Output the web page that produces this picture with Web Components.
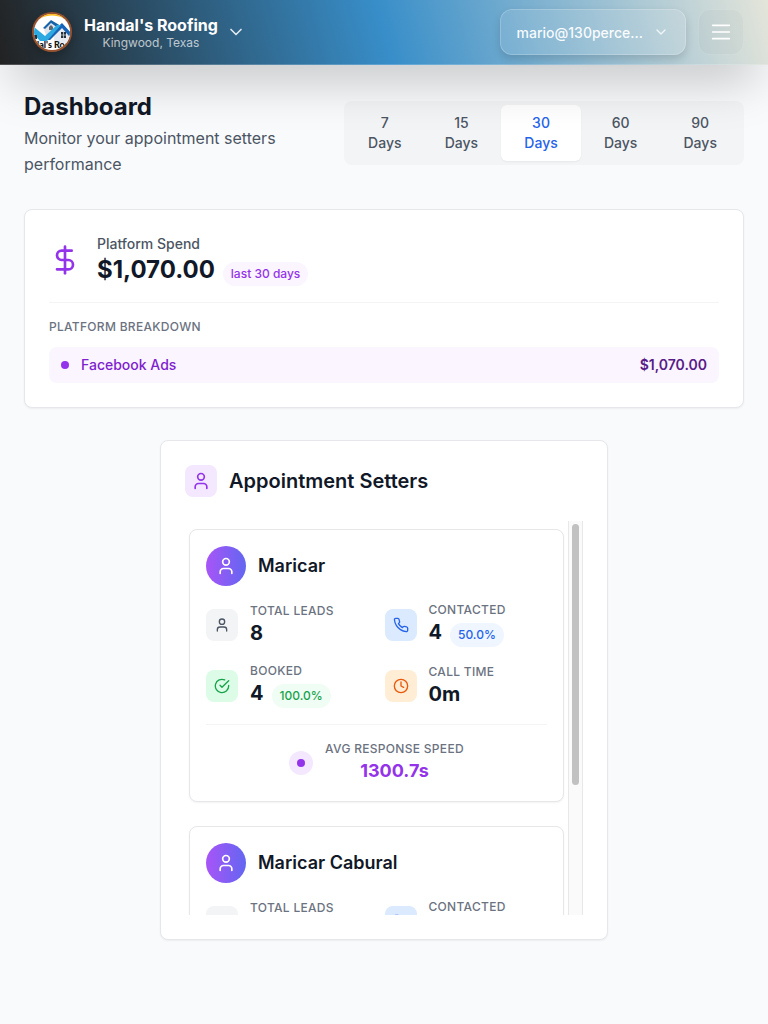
<!DOCTYPE html>
<html lang="en">
<head>
<meta charset="utf-8">
<meta name="viewport" content="width=device-width, initial-scale=1">
<title>Dashboard</title>
<style>
  body {
    margin: 0;
    min-height: 100vh;
    background: #f9fafc;
    color: #111827;
    font-family: Inter, "Liberation Sans", sans-serif;
    font-size: 16px;
  }
</style>
</head>
<body>
<dashboard-app></dashboard-app>

<script>
const ICONS = {
  user: '<path d="M19 21v-2a4 4 0 0 0-4-4H9a4 4 0 0 0-4 4v2"/><circle cx="12" cy="7" r="4"/>',
  dollar: '<path d="M12 2v20"/><path d="M17 5H9.5a3.5 3.5 0 0 0 0 7h5a3.5 3.5 0 0 1 0 7H6"/>',
  phone: '<path d="M22 16.92v3a2 2 0 0 1-2.18 2 19.79 19.79 0 0 1-8.63-3.07 19.5 19.5 0 0 1-6-6 19.79 19.79 0 0 1-3.07-8.67A2 2 0 0 1 4.11 2h3a2 2 0 0 1 2 1.72 12.84 12.84 0 0 0 .7 2.81 2 2 0 0 1-.45 2.11L8.09 9.91a16 16 0 0 0 6 6l1.27-1.27a2 2 0 0 1 2.11-.45 12.84 12.84 0 0 0 2.81.7A2 2 0 0 1 22 16.92z"/>',
  check: '<path d="M22 11.08V12a10 10 0 1 1-5.93-9.14"/><path d="m9 11 3 3L22 4"/>',
  clock: '<circle cx="12" cy="12" r="10"/><path d="M12 6v6l4 2"/>',
  chevron: '<path d="m6 9 6 6 6-6"/>',
  menu: '<path d="M2 4h20M2 12h20M2 20h20"/>'
};

function define(name, html, setup) {
  const template = document.createElement('template');
  template.innerHTML = '<style>*{box-sizing:border-box}p,h1,h2,h3{margin:0}button{font:inherit;color:inherit;border:0;background:none;padding:0;cursor:pointer}</style>' + html;
  customElements.define(name, class extends HTMLElement {
    constructor() {
      super();
      this.attachShadow({ mode: 'open' }).append(template.content.cloneNode(true));
    }
    connectedCallback() { if (setup) setup(this, this.shadowRoot); }
  });
}

define('ui-icon', `
  <style>
    :host { display: block; flex: none; width: var(--size, 16px); height: var(--size, 16px); }
    svg { display: block; width: 100%; height: 100%; }
  </style>
  <svg viewBox="0 0 24 24" fill="none" stroke="currentColor" stroke-width="2" stroke-linecap="round" stroke-linejoin="round" aria-hidden="true"></svg>
`, (host, root) => { root.querySelector('svg').innerHTML = ICONS[host.getAttribute('name')]; });

define('ui-chip', `
  <style>
    :host { display: inline-block; padding: 4px 8px; border-radius: 12px; font-size: 12px; font-weight: 500; line-height: 16px; color: #9333ea; background: #faf5ff; }
    :host([tone="blue"]) { color: #2563eb; background: #eff6ff; }
    :host([tone="green"]) { color: #16a34a; background: #f0fdf4; }
  </style>
  <slot></slot>
`);

define('brand-logo', `
  <style>
    :host { display: block; width: 40px; height: 40px; border-radius: 50%; box-shadow: 0 4px 12px rgba(0,0,0,.25); }
    svg { display: block; width: 100%; height: 100%; }
  </style>
  <svg viewBox="0 0 40 40" role="img" aria-label="Handal's Roofing logo">
    <clipPath id="disc"><circle cx="20" cy="20" r="18"/></clipPath>
    <circle cx="20" cy="20" r="20" fill="#97532f"/>
    <g clip-path="url(#disc)">
      <rect width="40" height="40" fill="#fff"/>
      <path d="M2 14C6 0 34 0 38 14L40 0H0Z" fill="#fdb913"/>
      <path d="M2 17C8 4 32 4 38 17L38 19H2Z" fill="#fff"/>
      <path d="M12 18L19 11L26 16L16 27Z" fill="#dfe4ea"/>
      <path d="M11 16L19 8L29 14L26 16L19 11L13 17Z" fill="#1763a8"/>
      <path d="M17 15l2-2 2 2v3h-4z" fill="#5d6873"/>
      <path d="M22 23l8-8 8 9v7H22z" fill="#e7eaf0"/>
      <path d="M30 11L40 22L37 24L30 16L18 28H14V25Z" fill="#1763b5"/>
      <path d="M2 15L13 24L25 13H29L15 29H8L1 21Z" fill="#2ba9e0"/>
      <path d="M29 20h5v6h-5z" fill="#27303a"/>
      <path d="M31.500 20v6M29 23h5" stroke="#dfe5ea" stroke-width=".7"/>
      <path d="M2 23h3v4H2z" fill="#27303a"/>
      <text x="20" y="36" text-anchor="middle" font-family="Lato, sans-serif" font-weight="900" font-size="9" fill="#111">dal's Roo</text>
    </g>
  </svg>
`);

define('app-header', `
  <style>
    :host { display: block; position: sticky; top: 0; z-index: 10; color: #fff; }
    header {
      display: flex; align-items: center; justify-content: space-between; gap: 12px;
      padding: 9px 24px; border-bottom: 1px solid rgba(255,255,255,.2);
      background: linear-gradient(75deg, #222 0%, #388ec9 50%, #e4e5da 100%) border-box;
      box-shadow: 0 25px 50px -12px rgba(0,0,0,.25);
    }
    .brand { display: flex; align-items: center; gap: 8px; padding: 0 8px; }
    .names { display: flex; flex-direction: column; padding: 2px 0 0 4px; text-align: center; }
    .name { font-weight: 700; line-height: 20px; }
    .place { font-size: 12px; line-height: 16px; color: rgba(255,255,255,.7); }
    .brand ui-icon { --size: 20px; color: rgba(255,255,255,.85); }
    .tools { display: flex; gap: 12px; }
    .account, .menu { height: 46px; border: 1px solid rgba(255,255,255,.2); border-radius: 12px; background: rgba(255,255,255,.1); }
    .account { display: flex; align-items: center; gap: 10px; padding: 0 16px; font-size: 14px; font-weight: 500; box-shadow: 0 4px 8px rgba(0,0,0,.14); color: rgba(255,255,255,.95); }
    .account ui-icon { color: rgba(255,255,255,.8); }
    .menu { display: grid; place-items: center; width: 46px; background: rgba(0,0,0,.02); border-color: rgba(255,255,255,.12); }
    .menu ui-icon { --size: 20px; }
  </style>
  <header>
    <button class="brand">
      <brand-logo></brand-logo>
      <span class="names"><span class="name">Handal's Roofing</span><span class="place">Kingwood, Texas</span></span>
      <ui-icon name="chevron"></ui-icon>
    </button>
    <div class="tools">
      <button class="account">mario@130perce...<ui-icon name="chevron"></ui-icon></button>
      <button class="menu" aria-label="Open menu"><ui-icon name="menu"></ui-icon></button>
    </div>
  </header>
`);

define('period-tabs', `
  <style>
    :host { display: block; }
    .tabs { display: flex; padding: 4px; border-radius: 8px; background: #f3f4f6; }
    button { flex: 8 1 0; padding: 8px 16px; border-radius: 6px; font-size: 14px; font-weight: 500; line-height: 20px; color: #4b5563; }
    button:first-child { flex-grow: 7; }
    button[aria-pressed="true"] { background: #fff; color: #2563eb; box-shadow: 0 1px 2px rgba(0,0,0,.05); }
  </style>
  <div class="tabs">
    <button aria-pressed="false">7 Days</button>
    <button aria-pressed="false">15 Days</button>
    <button aria-pressed="true">30 Days</button>
    <button aria-pressed="false">60 Days</button>
    <button aria-pressed="false">90 Days</button>
  </div>
`, (host, root) => {
  const buttons = root.querySelectorAll('button');
  buttons.forEach(b => b.onclick = () => buttons.forEach(o => o.setAttribute('aria-pressed', o === b)));
});

define('ui-card', `
  <style>
    :host { display: block; box-sizing: border-box; padding: 24px; border: 1px solid #e5e7eb; border-radius: 8px; background: #fff; box-shadow: 0 1px 2px rgba(0,0,0,.05); }
  </style>
  <slot></slot>
`);

define('spend-card', `
  <style>
    :host { display: block; }
    .top { display: flex; align-items: center; gap: 16px; padding-bottom: 16px; border-bottom: 1px solid #f3f4f6; }
    .top ui-icon { --size: 32px; color: #9333ea; }
    .label { font-size: 14px; font-weight: 500; line-height: 20px; color: #4b5563; }
    .amount { display: flex; align-items: baseline; gap: 8px; height: 32px; }
    .value { font-size: 24px; font-weight: 700; line-height: 32px; }
    h3 { margin: 16px 0 12px; font-size: 12px; font-weight: 500; line-height: 16px; letter-spacing: .025em; color: #6b7280; }
    .row { display: flex; align-items: center; gap: 12px; padding: 8px 12px; border-radius: 8px; background: #faf5ff; font-size: 14px; font-weight: 500; line-height: 20px; color: #7e22ce; }
    .dot { width: 8px; height: 8px; border-radius: 50%; background: #9333ea; }
    .sum { margin-left: auto; font-weight: 600; color: #581c87; }
  </style>
  <ui-card>
    <div class="top">
      <ui-icon name="dollar"></ui-icon>
      <div>
        <p class="label">Platform Spend</p>
        <div class="amount"><span class="value">$1,070.00</span><ui-chip>last 30 days</ui-chip></div>
      </div>
    </div>
    <h3>PLATFORM BREAKDOWN</h3>
    <div class="row"><span class="dot"></span><span>Facebook Ads</span><span class="sum">$1,070.00</span></div>
  </ui-card>
`);

define('stat-item', `
  <style>
    :host { display: flex; align-items: center; gap: 12px; --bg: #f3f4f6; --fg: #4b5563; }
    :host([tone="blue"]) { --bg: #dbeafe; --fg: #2563eb; }
    :host([tone="green"]) { --bg: #dcfce7; --fg: #16a34a; }
    :host([tone="orange"]) { --bg: #ffedd5; --fg: #ea580c; }
    .tile { display: grid; place-items: center; flex: none; width: 32px; height: 32px; border-radius: 8px; background: var(--bg); color: var(--fg); }
    .label { font-size: 12px; font-weight: 500; line-height: 16px; letter-spacing: .025em; color: #6b7280; }
    .line { display: flex; align-items: baseline; gap: 8px; font-size: 20px; font-weight: 700; line-height: 28px; }
  </style>
  <span class="tile"></span>
  <div><p class="label"></p><div class="line"><slot></slot></div></div>
`, (host, root) => {
  root.querySelector('.tile').innerHTML = '<ui-icon name="' + host.getAttribute('icon') + '"></ui-icon>';
  root.querySelector('.label').textContent = host.getAttribute('label');
});

define('setter-card', `
  <style>
    :host { display: block; box-sizing: border-box; padding: 16px; border: 1px solid #e5e7eb; border-radius: 8px; background: #fff; box-shadow: 0 1px 2px rgba(0,0,0,.05); }
    .who { display: flex; align-items: center; gap: 12px; }
    .avatar { display: grid; place-items: center; width: 40px; height: 40px; border-radius: 50%; background: linear-gradient(to right, #a855f7, #6366f1); color: #fff; --size: 20px; }
    h3 { font-size: 18px; font-weight: 600; line-height: 28px; }
    .stats { display: grid; grid-template-columns: 1fr 1fr; gap: 16px; margin: 16px 0; }
    .speed { display: flex; align-items: center; justify-content: center; gap: 12px; padding-top: 16px; border-top: 1px solid #f3f4f6; text-align: center; }
    .pulse { display: grid; place-items: center; width: 24px; height: 24px; border-radius: 50%; background: #f3e8ff; }
    .pulse i { width: 8px; height: 8px; border-radius: 50%; background: #9333ea; }
    .label { font-size: 12px; font-weight: 500; line-height: 16px; letter-spacing: .025em; color: #6b7280; }
    .value { font-size: 18px; font-weight: 700; line-height: 28px; color: #9333ea; }
  </style>
  <div class="who"><span class="avatar"><ui-icon name="user"></ui-icon></span><h3><slot></slot></h3></div>
  <div class="stats">
    <stat-item icon="user" label="TOTAL LEADS">8</stat-item>
    <stat-item icon="phone" label="CONTACTED" tone="blue"><span>4</span><ui-chip tone="blue">50.0%</ui-chip></stat-item>
    <stat-item icon="check" label="BOOKED" tone="green"><span>4</span><ui-chip tone="green">100.0%</ui-chip></stat-item>
    <stat-item icon="clock" label="CALL TIME" tone="orange">0m</stat-item>
  </div>
  <div class="speed">
    <span class="pulse"><i></i></span>
    <div><p class="label">AVG RESPONSE SPEED</p><p class="value">1300.7s</p></div>
  </div>
`);

// A scrolling area with its own always-visible rail.
define('scroll-area', `
  <style>
    :host { display: flex; max-height: 394px; }
    .view { flex: 1; min-width: 0; overflow-y: auto; scrollbar-width: none; }
    .rail { flex: none; width: 15px; padding: 3px; border: solid #e8e8e8; border-width: 0 1px; background: #fafafa; overflow: hidden; }
    .rail div { width: 100%; border-radius: 4px; background: #c1c1c1; }
  </style>
  <div class="view" tabindex="0"><slot></slot></div>
  <div class="rail" aria-hidden="true"><div></div></div>
`, (host, root) => {
  const view = root.querySelector('.view');
  const thumb = root.querySelector('.rail div');
  const update = () => {
    const length = view.clientHeight - 6;
    thumb.style.height = Math.round(length * view.clientHeight / view.scrollHeight) + 'px';
    thumb.style.transform = 'translateY(' + Math.round(length * view.scrollTop / view.scrollHeight) + 'px)';
  };
  view.addEventListener('scroll', update);
  new ResizeObserver(update).observe(view);
});

define('setters-panel', `
  <style>
    :host { display: block; width: 100%; max-width: 448px; margin: 0 auto; }
    .head { display: flex; align-items: center; gap: 12px; margin-bottom: 24px; }
    .tile { display: grid; place-items: center; width: 32px; height: 32px; border-radius: 8px; background: #f3e8ff; color: #9333ea; --size: 20px; }
    h2 { font-size: 20px; font-weight: 600; line-height: 28px; }
    .list { display: flex; flex-direction: column; gap: 24px; padding: 8px 4px; }
  </style>
  <ui-card>
    <div class="head"><span class="tile"><ui-icon name="user"></ui-icon></span><h2>Appointment Setters</h2></div>
    <scroll-area>
      <div class="list">
        <setter-card>Maricar</setter-card>
        <setter-card>Maricar Cabural</setter-card>
      </div>
    </scroll-area>
  </ui-card>
`);

define('dashboard-app', `
  <style>
    :host { display: block; }
    main { display: flex; flex-direction: column; gap: 32px; padding: 24px; }
    .intro { display: flex; align-items: center; gap: 16px; }
    .intro div { flex: 1; min-width: 0; }
    .intro period-tabs { flex: 0 1 400px; }
    h1 { font-size: 24px; font-weight: 700; line-height: 36px; }
    .sub { line-height: 26px; color: #4b5563; }
  </style>
  <app-header></app-header>
  <main>
    <div class="intro">
      <div><h1>Dashboard</h1><p class="sub">Monitor your appointment setters performance</p></div>
      <period-tabs></period-tabs>
    </div>
    <spend-card></spend-card>
    <setters-panel></setters-panel>
  </main>
`);
</script>
</body>
</html>
